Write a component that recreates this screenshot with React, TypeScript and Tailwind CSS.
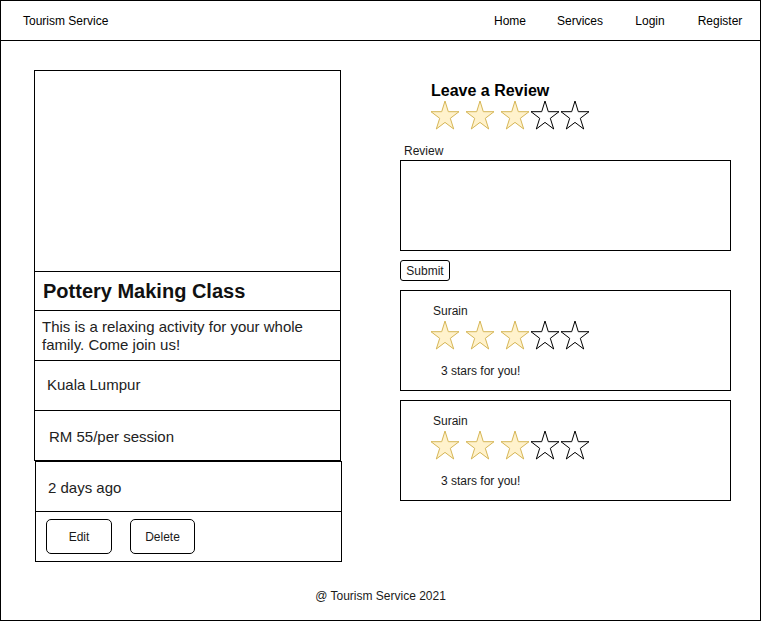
import React from "react";

const STAR_POINTS =
  "15,1 18.3,11.7 29,11.7 20.3,18.3 23.7,29 15,22.4 6.3,29 9.7,18.3 1,11.7 11.7,11.7";

function Star({ filled, className = "" }: { filled: boolean; className?: string }) {
  return (
    <svg width="30" height="30" viewBox="0 0 30 30" className={className}>
      <polygon
        points={STAR_POINTS}
        fill={filled ? "#fff2cc" : "#ffffff"}
        stroke={filled ? "#d6b656" : "#000000"}
        strokeWidth="1"
        strokeLinejoin="miter"
      />
    </svg>
  );
}

function Stars({ count }: { count: number }) {
  return (
    <div className="flex h-[31px] items-start">
      {[0, 1, 2, 3, 4].map((i) => {
        const filled = i < count;
        // filled stars are spaced apart, empty ones butt against each other
        const gap = i > 0 && filled ? "ml-[5px]" : "";
        return <Star key={i} filled={filled} className={gap} />;
      })}
    </div>
  );
}

function ReviewCard({ name, text }: { name: string; text: string }) {
  return (
    <div className="w-[331px] h-[101px] border border-black pl-[29px] pt-[13px]">
      <div className="pl-[3px] text-[12px] leading-[14px] text-[#1a1a1a]">{name}</div>
      <div className="mt-[2px]">
        <Stars count={3} />
      </div>
      <div className="mt-[13px] pl-[11px] text-[12px] leading-[14px] text-[#1a1a1a]">{text}</div>
    </div>
  );
}

export default function App() {
  const navItems = ["Home", "Services", "Login", "Register"];

  return (
    <div
      className="w-[762px] h-[622px] bg-white text-black"
      style={{ fontFamily: '"Liberation Sans", Arial, sans-serif' }}
    >
      <div className="w-[761px] h-[621px] border border-black flex flex-col">
        {/* header */}
        <div className="h-[40px] border-b border-black flex items-center pl-[22px] pr-[5px] text-[12px]">
          <span>Tourism Service</span>
          <div className="ml-auto flex">
            {navItems.map((item) => (
              <span key={item} className="w-[70px] text-center">
                {item}
              </span>
            ))}
          </div>
        </div>

        {/* content */}
        <div className="flex pl-[33px] pt-[29px]">
          {/* activity card */}
          <div className="w-[308px] flex flex-col">
            <div className="w-[307px] border border-black flex flex-col">
              <div className="h-[200px]" />
              <div className="h-[39px] border-t border-black flex items-center pl-[8px] text-[20px] font-bold text-[#111]">
                Pottery Making Class
              </div>
              <div className="h-[50px] border-t border-black flex items-center pl-[7px] text-[15px] leading-[18px] text-[#222]">
                This is a relaxing activity for your whole family. Come join us!
              </div>
              <div className="h-[50px] border-t border-black flex items-center pl-[12px] text-[15px] text-[#222]">
                Kuala Lumpur
              </div>
              <div className="h-[50px] border-t border-black flex items-center pl-[14px] pt-[3px] text-[15px] text-[#222]">
                RM 55/per session
              </div>
            </div>
            <div className="w-[307px] ml-[1px] border border-black flex flex-col">
              <div className="h-[50px] border-b border-black flex items-center pl-[12px] pt-[3px] text-[15px] text-[#222]">
                2 days ago
              </div>
              <div className="h-[49px] flex items-start pl-[10px] pt-[7px] gap-[18px] text-[12px]">
                <button className="w-[66px] h-[35px] border border-black rounded-[5px] bg-white text-[#1a1a1a]">
                  Edit
                </button>
                <button className="w-[65px] h-[35px] border border-black rounded-[5px] bg-white text-[#1a1a1a]">
                  Delete
                </button>
              </div>
            </div>
          </div>

          {/* review column */}
          <div className="ml-[58px] flex flex-col">
            <div className="mt-[12px] pl-[31px] text-[16px] leading-[18px] font-bold">
              Leave a Review
            </div>
            <div className="pl-[30px]">
              <Stars count={3} />
            </div>
            <div className="mt-[13px] pl-[4px] text-[12px] leading-[14px] text-[#1a1a1a]">Review</div>
            <div className="mt-[2px] w-[331px] h-[91px] border border-black" />
            <button className="mt-[9px] w-[50px] h-[21px] border border-black rounded-[3px] bg-white text-[12px] leading-[14px] text-[#1a1a1a]">
              Submit
            </button>
            <div className="mt-[9px]">
              <ReviewCard name="Surain" text="3 stars for you!" />
            </div>
            <div className="mt-[9px]">
              <ReviewCard name="Surain" text="3 stars for you!" />
            </div>
          </div>
        </div>

        {/* footer */}
        <div className="mt-[27px] text-center text-[12px] leading-[14px] text-[#1a1a1a]">
          @ Tourism Service 2021
        </div>
      </div>
    </div>
  );
}
